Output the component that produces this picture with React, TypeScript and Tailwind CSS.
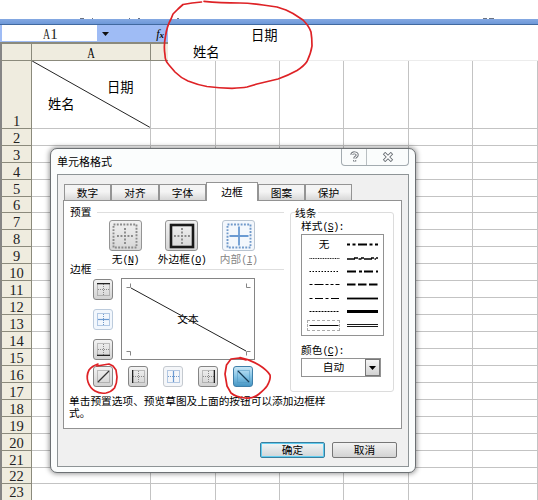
import React from "react";

const SANS = "font-['Noto_Sans_CJK_SC',sans-serif]";
const ROWS = Array.from({ length: 21 }, (_, i) => i + 2);

function Key({ k, colon }: { k: string; colon?: boolean }) {
  return (
    <span className="font-['Liberation_Mono','Noto_Sans_CJK_SC',monospace] text-[10px] tracking-[-0.6px]">
      (<span className="underline underline-offset-1">{k}</span>){colon ? ":" : ""}
    </span>
  );
}

function GridCells() {
  return (
    <>
      <div className="w-[65px] shrink-0 border-r border-[#c3c3c3]" />
      <div className="w-[64px] shrink-0 border-r border-[#c3c3c3]" />
      <div className="w-[64px] shrink-0 border-r border-[#c3c3c3]" />
      <div className="w-[65px] shrink-0 border-r border-[#c3c3c3]" />
      <div className="w-[64px] shrink-0 border-r border-[#c3c3c3]" />
      <div className="w-[65px] shrink-0 border-r border-[#c3c3c3]" />
    </>
  );
}

function RowHeader({ n }: { n: number }) {
  return (
    <div className="flex w-[32px] shrink-0 items-end justify-center border-r border-b border-l-2 border-[#8b8a7c] border-l-[#858585] bg-[#efecdf] font-['Liberation_Serif',serif] text-[14.5px] leading-[14px] text-[#222]">
      {n}
    </div>
  );
}

type Kind = "none" | "outer" | "inner" | "top" | "mid" | "bottom" | "up" | "left" | "vert" | "right" | "down";

function Glyph({ kind, className }: { kind: Kind; className: string }) {
  const blue = kind === "inner" || kind === "mid" || kind === "vert";
  const dot = blue ? "#7099ca" : kind === "down" ? "#4b92bf" : "#8a8a8a";
  const dark = blue ? "#6a9ad2" : "#222";
  const big = kind === "none" || kind === "outer" || kind === "inner";
  if (big) {
    return (
      <svg className={className} viewBox="0 0 26 26" fill="none">
        {kind === "outer" ? (
          <rect x="2" y="2" width="22" height="22" stroke="#191919" strokeWidth="2.6" />
        ) : (
          <rect x="1.5" y="1.5" width="23" height="23" stroke={dot} strokeWidth="1.9" strokeDasharray="1.9 1.386" />
        )}
        {kind === "inner" ? (
          <path d="M13 3.5v19M3.5 13h19" stroke={dark} strokeWidth="1.8" />
        ) : (
          <path d="M13 5v16M5 13h16" stroke={dot} strokeWidth="1.9" strokeDasharray="1.9 1.6" />
        )}
      </svg>
    );
  }
  return (
    <svg className={className} viewBox="0 0 13 13" fill="none">
      <rect x=".5" y=".5" width="12" height="12" stroke={dot} strokeDasharray="1 1" />
      {kind !== "up" && kind !== "down" && <path d="M6.5 1v11M1 6.5h11" stroke={dot} strokeDasharray="1 1" />}
      {kind === "top" && <path d="M0 .5h13" stroke={dark} strokeWidth="1.6" />}
      {kind === "bottom" && <path d="M0 12.5h13" stroke={dark} strokeWidth="1.6" />}
      {kind === "left" && <path d="M.5 0v13" stroke={dark} strokeWidth="1.6" />}
      {kind === "right" && <path d="M12.5 0v13" stroke={dark} strokeWidth="1.6" />}
      {kind === "mid" && <path d="M1 6.5h11" stroke={dark} strokeWidth="1.2" />}
      {kind === "vert" && <path d="M6.5 1v11" stroke={dark} strokeWidth="1.2" />}
      {kind === "up" && <path d="M1 12L12 1" stroke="#333" strokeWidth="1.2" />}
      {kind === "down" && <path d="M1 1l11 11" stroke="#173b55" strokeWidth="1.3" />}
    </svg>
  );
}

function SmallButton({ kind }: { kind: Kind }) {
  const look =
    kind === "down"
      ? "border-[#3f7fa9] bg-linear-to-b from-[#c9e6f5] via-[#83c3e5] to-[#4797c4]"
      : kind === "mid" || kind === "vert"
        ? kind === "mid"
          ? "border-[#bccbdc] bg-[#f2f7fd]"
          : "border-[#c4c9cf] bg-[#f4f6f9]"
        : "border-[#858585] bg-linear-to-b from-[#f3f3f3] to-[#d2d2d2]";
  return (
    <button className={"flex h-[21px] w-[20px] items-center justify-center rounded-[3px] border " + look}>
      <Glyph kind={kind} className="size-[13px] shrink-0" />
    </button>
  );
}

function Preset({ kind, label, k }: { kind: Kind; label: string; k: string }) {
  const off = kind === "inner";
  return (
    <div className="flex flex-col items-center">
      <button
        className={
          "flex h-[31px] w-[33px] items-center justify-center rounded-[3px] border " +
          (off ? "border-[#b9c4d0] bg-[#f3f7fc]" : "border-[#949494] bg-linear-to-b from-[#f1f1f1] to-[#d6d6d6]")
        }
      >
        <Glyph kind={kind} className="size-[26px] shrink-0" />
      </button>
      <div className={"mt-[2px] h-[11px] whitespace-nowrap leading-[11px] " + (off ? "text-[#858585]" : "text-black")}>
        {label}
        <Key k={k} />
      </div>
    </div>
  );
}

function Heading({ text, className }: { text: string; className: string }) {
  return (
    <div className={"flex items-center gap-[6px] pl-[6px] pr-[6px] " + className}>
      <span className="leading-none">{text}</span>
      <div className="h-px flex-1 bg-[#dedede]" />
    </div>
  );
}

function Tab({ text, active, className }: { text: string; active?: boolean; className: string }) {
  return (
    <div
      className={
        "flex items-center justify-center border-x border-t border-[#949494] " +
        (active ? "bg-white pt-px " : "h-[16px] bg-linear-to-b from-[#f4f4f4] from-45% to-[#d7d7d7] pt-[2px] ") +
        className
      }
    >
      {text}
    </div>
  );
}

function LineSample({ dash, w = 1, right }: { dash?: string; w?: number; right?: boolean }) {
  return (
    <svg className="h-[5px] w-[31px]" viewBox="0 0 31 5" fill="none">
      <path d={right ? "M0 2.5h31" : "M0.5 2.5h30"} stroke="#000" strokeWidth={w} strokeDasharray={dash} />
    </svg>
  );
}

function LineStyles() {
  return (
    <div className="grid h-[102px] w-[83px] grid-cols-2 border border-[#929292] bg-white pl-[5px] pt-[3px]">
      <div className="flex flex-col">
        <div className="flex h-[13.4px] w-[34px] items-center justify-center leading-none">无</div>
        <div className="flex h-[13.4px] items-center pl-[2px]"><LineSample dash="1 .7" w={0.9} /></div>
        <div className="flex h-[13.4px] items-center pl-[2px]"><LineSample dash="1.5 1.5" /></div>
        <div className="flex h-[13.4px] items-center pl-[2px]"><LineSample dash="3 2 9 2 3 2" /></div>
        <div className="flex h-[13.4px] items-center pl-[2px]"><LineSample dash="3 2.5 8 2.5" /></div>
        <div className="flex h-[13.4px] items-center pl-[2px]"><LineSample dash="2 1" /></div>
        <div className="flex h-[13.4px] w-[33px] items-center">
          <div className="flex h-[11px] w-[33px] items-center border border-dashed border-[#aaa] pl-px"><LineSample /></div>
        </div>
      </div>
      <div className="flex flex-col pl-[2px]">
        <div className="flex h-[13.4px] items-center"><LineSample right dash="3 2.5 3 2.5 9 2.5" w={2} /></div>
        <div className="flex h-[13.4px] items-center">
          <svg className="h-[5px] w-[31px]" viewBox="0 0 31 5" fill="none">
            <path d="M0 3h8M7 2h4M11.500 3h3M14 2h3M17 3h8M24 2h3M27.500 3h1.500M29 2h2" stroke="#000" strokeWidth="1.7" />
          </svg>
        </div>
        <div className="flex h-[13.4px] items-center"><LineSample right dash="9 3 3 2" w={2} /></div>
        <div className="flex h-[13.4px] items-center"><LineSample right dash="8.5 2.5" w={2} /></div>
        <div className="flex h-[13.4px] items-center"><LineSample right w={1.8} /></div>
        <div className="flex h-[13.4px] items-center"><LineSample right w={3} /></div>
        <div className="flex h-[13.4px] items-center">
          <svg className="h-[5px] w-[31px]" viewBox="0 0 31 5" fill="none">
            <path d="M0 1.5h31M0 3.5h31" stroke="#000" strokeWidth=".9" />
          </svg>
        </div>
      </div>
    </div>
  );
}

function Dialog() {
  return (
    <div className="absolute left-[50px] top-[148px] flex h-[325px] w-[366px] flex-col rounded-[7px] border border-[#6d7174] bg-[#fbfdfd] px-[6px] text-[10.7px] text-black shadow-[0_0_5px_1px_rgba(0,0,0,0.4)]">
      <div className="flex h-[25px] items-start justify-between">
        <div className="pt-[6px] leading-[13px] text-[11px]">单元格格式</div>
        <div className="flex h-[17px] rounded-b-[4px] border border-t-0 border-[#a3abb0] bg-[#fafcfc]">
          <div className="flex w-[25px] items-center justify-center border-r border-[#b9bfc2]">
            <svg className="h-[12px] w-[9px]" viewBox="0 0 9 12" fill="none">
              <path d="M1.800 3.800C1.800 1.200 7.200 1.200 7.200 4c0 2-2.500 1.800-2.500 3.600M4.700 9v1.600" stroke="#676d73" strokeWidth="3" />
              <path d="M1.800 3.800C1.800 1.200 7.200 1.200 7.200 4c0 2-2.500 1.800-2.500 3.600M4.700 9v1.300" stroke="#fff" strokeWidth="1.1" />
            </svg>
          </div>
          <div className="flex w-[41px] items-center justify-center">
            <svg className="h-[10px] w-[12px]" viewBox="0 0 12 10" fill="none">
              <path d="M2 1l8 8M10 1L2 9" stroke="#676d73" strokeWidth="3.4" />
              <path d="M2.6 1.6l6.8 6.8M9.400 1.600L2.600 8.400" stroke="#fff" strokeWidth="1.6" />
            </svg>
          </div>
        </div>
      </div>
      <div className="flex h-[293px] flex-col border border-[#8e9496] bg-[#f0f0f0] px-[5px] pt-[7px]">
        <div className="z-10 -mb-px flex h-[19px] items-end pl-px">
          <Tab text="数字" className="mb-px w-[47px]" />
          <Tab text="对齐" className="mb-px w-[48px]" />
          <Tab text="字体" className="mb-px w-[47px]" />
          <Tab text="边框" active className="h-[19px] w-[52px]" />
          <Tab text="图案" className="mb-px w-[47px]" />
          <Tab text="保护" className="mb-px w-[47px]" />
        </div>
        <div className="h-[229px] w-[339px] shrink-0 border border-[#929292] bg-white">
          <div className="flex h-[191px]">
            <div className="w-[226px] pt-[5px]">
              <Heading text="预置" className="h-[13px]" />
              <div className="ml-[33px] mt-px grid w-[170px] grid-cols-3">
                <Preset kind="none" label="无" k="N" />
                <Preset kind="outer" label="外边框" k="O" />
                <Preset kind="inner" label="内部" k="I" />
              </div>
              <Heading text="边框" className="h-[10px]" />
              <div className="ml-[29px] mt-[4px] flex gap-[8px]">
                <div className="flex h-[82px] flex-col justify-between pt-px">
                  <SmallButton kind="top" />
                  <SmallButton kind="mid" />
                  <SmallButton kind="bottom" />
                </div>
                <div className="relative flex h-[82px] w-[134px] items-center justify-center border border-[#858585] bg-white">
                  <svg className="absolute inset-0 size-full" viewBox="0 0 132 80" fill="none">
                    <path d="M4.500 8.500h4v-4M124.500 4.500v4h4M4.500 72.500h4v4M124.500 76.500v-4h4" stroke="#858585" />
                    <path d="M9 9l115 63" stroke="#222" />
                  </svg>
                  <span className="leading-none">文本</span>
                </div>
              </div>
              <div className="ml-[29px] mt-[6px] flex w-[160px] justify-between">
                <SmallButton kind="up" />
                <SmallButton kind="left" />
                <SmallButton kind="vert" />
                <SmallButton kind="right" />
                <SmallButton kind="down" />
              </div>
            </div>
            <div className="mt-[11px] h-[180px] w-[104px] rounded-[3px] border border-[#dcdcdc] pl-[4px]">
              <div className="-mt-[7px] h-[13px] w-[23px] bg-white leading-[13px]">线条</div>
              <div className="pl-[6px]">
                <div className="h-[15px] leading-[13px]">样式<Key k="S" colon /></div>
                <LineStyles />
                <div className="mt-[7px] h-[15px] leading-[13px]">颜色<Key k="C" colon /></div>
                <div className="flex h-[19px] w-[80px] border border-[#929292] bg-white">
                  <div className="flex flex-1 items-center justify-center leading-none">自动</div>
                  <div className="flex w-[15px] items-center justify-center border border-[#777] bg-linear-to-b from-[#f5f5f5] to-[#d2d2d2]">
                    <svg className="h-[4px] w-[7px]" viewBox="0 0 7 4"><path d="M0 0h7L3.500 4z" fill="#000" /></svg>
                  </div>
                </div>
              </div>
            </div>
          </div>
          <p className="mt-[3px] pl-[5px] leading-[11.5px] whitespace-nowrap">
            单击预置选项、预览草图及上面的按钮可以添加边框样<br />式。
          </p>
        </div>
        <div className="mt-[13px] flex gap-[7px] pl-[197px]">
          <button className="flex h-[16px] w-[65px] items-center justify-center rounded-[2px] border border-[#397e9e] bg-linear-to-b from-[#f2f5f6] to-[#cfd5d8] leading-none shadow-[inset_0_0_0_1px_#61cdf0]">确定</button>
          <button className="flex h-[16px] w-[65px] items-center justify-center rounded-[2px] border border-[#777] bg-linear-to-b from-[#f3f3f3] to-[#d3d3d3] leading-none">取消</button>
        </div>
      </div>
    </div>
  );
}

export default function App() {
  return (
    <div className={"relative h-[500px] w-[538px] overflow-hidden bg-white text-[13.3px] text-black " + SANS}>
      <svg className="block h-[19px] w-full" viewBox="0 0 538 19">
        <path d="M80 18.500h4M92 18.500h1M129 18.500h1M138 18.500h2M177 18.500h2M483 18.500h4M489 18.500h5" stroke="#6c7484" />
      </svg>
      <div className="h-[6px] border-b border-[#41699f] bg-linear-to-b from-[#84a9e2] to-[#6e98d8]" />
      <div className="flex h-[36px]">
        <div className="w-[168px]">
          <div className="flex h-[17px] bg-[#9fbcf5] pl-[2px]">
            <div className="flex h-[16px] w-[95px] items-center justify-center bg-white pt-[3px] font-['Liberation_Serif',serif] text-[15px] leading-none text-[#222]">
              <span className="inline-block scale-x-65">A</span><span className="-ml-[2px]">1</span>
            </div>
            <div className="flex w-[16px] items-center justify-center">
              <svg className="h-[4px] w-[7px]" viewBox="0 0 7 4"><path d="M0 0h7L3.500 4z" fill="#111" /></svg>
            </div>
            <div className="flex flex-1 items-center justify-end pr-[4px] font-['Liberation_Serif',serif] text-[12px] italic leading-none">
              f<span className="pt-[3px] text-[9px] font-bold">x</span>
            </div>
          </div>
          <div className="flex h-[19px] border-t-[2px] border-b border-[#8b8a7c] border-l-2 border-l-[#858585] bg-[#efecdf]">
            <div className="w-[30px] border-r border-[#8b8a7c]" />
            <div className="flex w-[119px] items-center justify-center border-r border-[#8b8a7c] pt-[3px] font-['Liberation_Serif',serif] text-[14px] leading-none">
              <span className="inline-block scale-x-75">A</span>
            </div>
          </div>
        </div>
        <div className="flex-1 border-b border-[#ececec] bg-white leading-[17px]">
          <div className="pl-[83px] pt-[1px]">日期</div>
          <div className="pl-[25px]">姓名</div>
        </div>
      </div>
      <div className="flex h-[67.8px]">
        <RowHeader n={1} />
        <div className="relative w-[119px] shrink-0 border-r border-b border-[#c3c3c3]">
          <svg className="absolute inset-0 size-full" viewBox="0 0 118 67" fill="none"><path d="M0 0l118 66.500" stroke="#222" /></svg>
          <div className="pl-[75px] pt-[17px] leading-[17px]">日期</div>
          <div className="pl-[16px] leading-[17px]">姓名</div>
        </div>
        <div className="flex border-b border-[#c3c3c3]"><GridCells /></div>
      </div>
      {ROWS.map((n) => (
        <div key={n} className="flex h-[16.95px]">
          <RowHeader n={n} />
          <div className="w-[119px] shrink-0 border-r border-b border-[#c3c3c3]" />
          <div className="flex border-b border-[#c3c3c3]"><GridCells /></div>
        </div>
      ))}
      <div className="flex h-[17px]">
        <div className="w-[32px] shrink-0 border-r border-l-2 border-[#8b8a7c] border-l-[#858585] bg-[#efecdf] text-center font-['Liberation_Serif',serif] text-[14.5px] leading-[17px] text-[#222]">
          23
        </div>
        <div className="w-[119px] shrink-0 border-r border-[#c3c3c3]" />
        <GridCells />
      </div>
      <Dialog />
      <svg className="pointer-events-none absolute inset-0 size-full" viewBox="0 0 538 500" fill="none" stroke="#de2226" strokeWidth="1.7" strokeLinecap="round" strokeLinejoin="round">
        <path d="M201.500 2L192 3L183 4.500L178 9L173 14L171 19Q167 26 165.500 36Q163.500 46 165 55Q165 61 169 65L175 72Q181 78 188 81Q198 85 207 86.500Q219 88 232 88.300Q242 88 247 87L257 84L278 79Q289 75 297 70.500Q304 66 307 61.500Q311 53 312 46Q312 38 311 32Q309 26 303 20L293 13.500L286 10L277 7L263 5Q250 3 240 3Q220 3 204 1.300" />
        <path d="M97 366L103 365L109 364L113 366L116 370L117 377Q117 383 114.500 388Q111 392 106 393Q100 394 95 391Q90 388 88 382Q86 376 89 370Q92 366 98 364" />
        <path d="M246 360L239 358L231 359L226.500 365L225 374L227 386L231 393Q236 397 245 398Q253 399 259 394Q265 389 267 386Q271 379 270 375Q267 370 259 365Q249 359 240 357.500" />
      </svg>
    </div>
  );
}
